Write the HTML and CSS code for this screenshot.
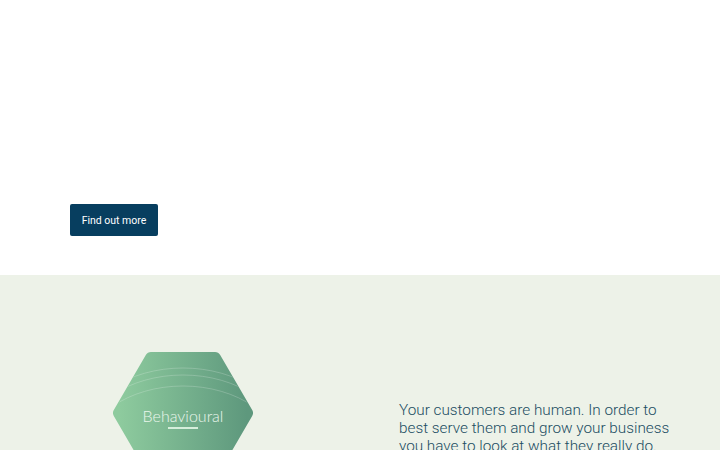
FILE: index.html
```html
<!DOCTYPE html>
<html lang="en">
<head>
<meta charset="utf-8">
<title>Behavioural</title>
<link rel="stylesheet" href="styles.css">
</head>
<body>
<section class="hero">
  <a class="btn" href="#">Find out more</a>
</section>
<section class="intro">
  <div class="hex">
    <svg class="hex-shape" width="140" height="122" viewBox="0 0 140 122">
      <defs>
        <linearGradient id="g" x1="0" y1="0" x2="1" y2="0">
          <stop offset="0" stop-color="#8ecb9e"/>
          <stop offset="1" stop-color="#5e987d"/>
        </linearGradient>
        <clipPath id="c">
          <polygon points="35,0 105,0 140,61 105,122 35,122 0,61"/>
        </clipPath>
      </defs>
      <polygon points="38,6 102,6 134,61 102,116 38,116 6,61" fill="url(#g)" stroke="url(#g)" stroke-width="12" stroke-linejoin="round"/>
      <g clip-path="url(#c)" fill="none" stroke="#ffffff" stroke-opacity="0.2" stroke-width="1">
        <ellipse cx="70" cy="84" rx="100" ry="68"/>
        <ellipse cx="70" cy="92" rx="100" ry="69"/>
        <ellipse cx="70" cy="104" rx="100" ry="70"/>
      </g>
    </svg>
    <div class="hex-label">Behavioural</div>
  </div>
  <p class="lead">Your customers are human. In order to best serve them and grow your business you have to look at what they really do.</p>
</section>
</body>
</html>
```
FILE: styles.css
```css
html, body {
  margin: 0;
  padding: 0;
  background: #ffffff;
  font-family: "Roboto", "Lato", sans-serif;
}
.hero {
  height: 275px;
  box-sizing: border-box;
  padding: 204px 0 0 70px;
}
.btn {
  display: inline-flex;
  align-items: center;
  justify-content: center;
  width: 88px;
  height: 32px;
  background: #073e5f;
  color: #ffffff;
  border-radius: 2px;
  font-family: "Roboto", sans-serif;
  font-size: 10.5px;
  text-decoration: none;
}
.intro {
  background: #edf2e8;
  display: flex;
  align-items: flex-start;
  gap: 146px;
  padding: 77px 0 0 113px;
  height: 175px;
  box-sizing: border-box;
  overflow: hidden;
}
.hex {
  position: relative;
  width: 140px;
  height: 122px;
  flex: none;
}
.hex-shape {
  display: block;
}
.hex-label {
  position: absolute;
  left: 0;
  right: 0;
  top: 54px;
  text-align: center;
  color: #eaf6ec;
  font-family: "Lato", sans-serif;
  font-size: 16px;
  font-weight: 300;
}
.hex-label::after {
  content: "";
  display: block;
  width: 30px;
  height: 2px;
  margin: 2px auto 0;
  background: #d6eedb;
}
.lead {
  margin: 49px 0 0;
  width: 285px;
  font-size: 15.3px;
  font-weight: 300;
  line-height: 18px;
  color: #1b4d62;
}
```
